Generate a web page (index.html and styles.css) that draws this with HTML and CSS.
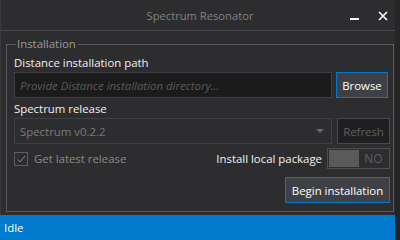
FILE: index.html
```html
<!DOCTYPE html>
<html lang="en">
<head>
  <meta charset="UTF-8" />
  <title>Spectrum Resonator</title>
  <link rel="stylesheet" href="styles.css">
</head>
<body>
  <div class="window">
    <div class="titlebar">
      <span class="title">Spectrum Resonator</span>
      <div class="controls">
        <span class="min"></span>
        <svg class="close" width="10" height="10" viewBox="0 0 10 10">
          <path d="M1 1 L9 9 M9 1 L1 9" stroke="#ffffff" stroke-width="1.6" fill="none"/>
        </svg>
      </div>
    </div>

    <div class="content">
      <fieldset class="group">
        <legend>Installation</legend>

        <label class="field-label first">Distance installation path</label>
        <div class="row">
          <input type="text" class="textbox" placeholder="Provide Distance installation directory..." />
          <button class="btn primary">Browse</button>
        </div>

        <label class="field-label">Spectrum release</label>
        <div class="row">
          <div class="combo">
            <span>Spectrum v0.2.2</span>
            <span class="arrow"></span>
          </div>
          <button class="btn disabled">Refresh</button>
        </div>

        <div class="row options">
          <div class="check">
            <span class="box">
              <svg width="12" height="12" viewBox="0 0 12 12">
                <path d="M2.5 6.5 L5 9 L10 3" stroke="#8a8a8a" stroke-width="1" fill="none"/>
              </svg>
            </span>
            <span>Get latest release</span>
          </div>
          <div class="local">
            <span>Install local package</span>
            <div class="toggle">
              <span class="knob"></span>
              <span class="state">NO</span>
            </div>
          </div>
        </div>

        <div class="row actions">
          <button class="btn primary begin">Begin installation</button>
        </div>
      </fieldset>
    </div>

    <div class="statusbar">Idle</div>
  </div>
</body>
</html>
```

FILE: styles.css
```css
:root {
  --background: #2d2d30;
  --border: #3f3f46;
  --input-bg: #1b1b1c;
  --accent: #007acc;
  --text: #f1f1f1;
  --muted: #999999;
}

* {
  box-sizing: border-box;
}

body {
  margin: 0;
  width: 400px;
  height: 240px;
  background-color: #252526;
  font-family: "Open Sans", "Noto Sans", sans-serif;
  font-size: 11.4px;
  overflow: hidden;
}

.window {
  width: 395px;
  height: 240px;
  background-color: var(--background);
  border-left: 1px solid #3a3a3e;
  display: flex;
  flex-direction: column;
}

.titlebar {
  height: 31px;
  flex-shrink: 0;
  border-bottom: 1px solid #45454b;
  display: flex;
  align-items: center;
  justify-content: center;
  position: relative;
}

.title {
  color: #808080;
  font-size: 11.2px;
  margin-left: 4px;
}

.controls {
  position: absolute;
  right: 7px;
  top: 11px;
  display: flex;
  align-items: flex-end;
  gap: 19px;
}

.min {
  display: block;
  width: 9px;
  height: 2px;
  background-color: #ffffff;
  margin-bottom: 1px;
}

.close {
  display: block;
}

.content {
  flex: 1;
  padding: 6px 5px 0 5px;
}

.group {
  margin: 0;
  padding: 0 3px 0 7px;
  height: 175px;
  border: 1px solid #5a5a5e;
  display: flex;
  flex-direction: column;
}

.group legend {
  color: var(--muted);
  padding: 0 2px 0 1px;
  margin-left: 2px;
  line-height: 14px;
}

.field-label {
  display: block;
  color: var(--text);
  line-height: 15px;
  margin-top: 0;
  margin-bottom: 2px;
}

.field-label.first {
  margin-top: 4px;
}

.row {
  display: flex;
  align-items: center;
  gap: 4px;
  margin-bottom: 3px;
}

.textbox {
  width: 318px;
  height: 26px;
  background-color: var(--input-bg);
  border: 1px solid var(--border);
  color: var(--text);
  font-family: inherit;
  font-size: 11.4px;
  padding: 0 5px;
  outline: none;
}

.textbox::placeholder {
  color: #5a5a5a;
  font-style: italic;
}

.btn {
  height: 26px;
  font-family: inherit;
  font-size: 11.4px;
  padding: 0;
  cursor: pointer;
  white-space: nowrap;
}

.btn.primary {
  width: 52px;
  background-color: #3f3f46;
  border: 1px solid var(--accent);
  color: #ffffff;
}

.btn.disabled {
  width: 53px;
  background-color: #1f1f21;
  border: 1px solid #4a4656;
  color: #5f5f5f;
}

.combo {
  width: 318px;
  height: 26px;
  border: 1px solid var(--border);
  background-color: var(--background);
  color: #7a7a7a;
  display: flex;
  align-items: center;
  justify-content: space-between;
  padding: 0 7px 0 5px;
  margin-right: 1px;
}

.arrow {
  width: 0;
  height: 0;
  border-left: 4px solid transparent;
  border-right: 4px solid transparent;
  border-top: 4px solid #6a6a6a;
}

.options {
  justify-content: space-between;
  margin-top: 1px;
  margin-bottom: 8px;
}

.check {
  display: flex;
  align-items: center;
  gap: 6px;
  color: #8a8a8a;
}

.box {
  width: 14px;
  height: 14px;
  border: 1px solid #5f5f5f;
  display: flex;
  align-items: center;
  justify-content: center;
}

.local {
  display: flex;
  align-items: center;
  gap: 5px;
  color: var(--text);
}

.toggle {
  width: 63px;
  height: 21px;
  border: 1px solid #4f4f4f;
  display: flex;
  align-items: center;
  padding: 1px;
}

.knob {
  width: 30px;
  height: 17px;
  background-color: #5a5a5a;
}

.state {
  flex: 1;
  text-align: center;
  color: #5f5f5f;
  font-size: 12px;
}

.actions {
  justify-content: flex-end;
}

.btn.begin {
  width: 105px;
}

.statusbar {
  height: 25px;
  flex-shrink: 0;
  background-color: var(--accent);
  color: #ffffff;
  line-height: 25px;
  padding-left: 4px;
  margin-left: -1px;
}
```
